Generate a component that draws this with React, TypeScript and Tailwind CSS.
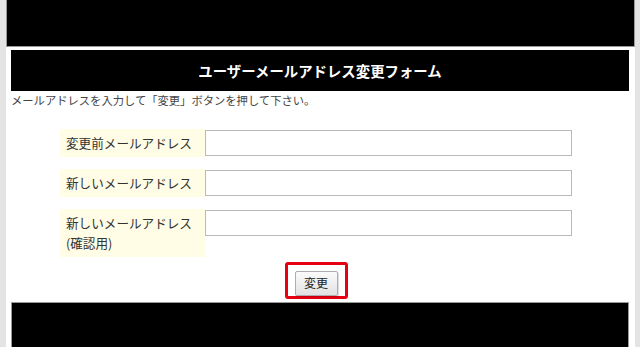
const jp = { fontFamily: '"Noto Sans CJK JP", "Noto Sans", sans-serif' };

const rows = [
  { key: 'old', label: ['変更前メールアドレス'] },
  { key: 'new', label: ['新しいメールアドレス'] },
  { key: 'confirm', label: ['新しいメールアドレス', '(確認用)'] },
];

export default function App() {
  return (
    <div className="min-h-[347px] w-[640px] overflow-hidden bg-[#e4e4e4] pl-[6px] pr-[5px]" style={jp}>
      <div className="min-h-[347px] bg-white">
        {/* header */}
        <div className="h-[47px] border border-t-0 border-[#9a9a9a] bg-black" />

        <div className="pl-[5px] pr-[6px] pt-[3px]">
          <div className="flex h-[41px] items-center justify-center bg-black">
            <h1 className="text-[14.4px] font-bold text-white">ユーザーメールアドレス変更フォーム</h1>
          </div>
          <p className="h-[18px] text-[11.3px] leading-[18px] text-[#444]">
            メールアドレスを入力して「変更」ボタンを押して下さい。
          </p>

          <form className="ml-[49px] mt-[20px] w-[512px]" onSubmit={(e) => e.preventDefault()}>
            <div className="flex flex-col gap-[12px]">
              {rows.map((row) => (
                <div key={row.key} className="flex">
                  <div className="flex w-[145px] flex-col justify-center bg-[#fffde6] py-[4px] pl-[6px] text-[12.6px] leading-[20px] text-[#333]">
                    {row.label.map((line) => (
                      <span key={line}>{line}</span>
                    ))}
                  </div>
                  <div className="flex-1">
                    <input
                      type="text"
                      className="h-[26px] w-[367px] border border-[#b9b9b9] bg-white px-1 text-[13px] outline-none"
                    />
                  </div>
                </div>
              ))}
            </div>

            <div className="mt-[5px] flex justify-center">
              <div className="rounded-[3px] border-[3px] border-[#e60012] px-[7px] pt-[4px]">
                <button
                  type="submit"
                  className="h-[25px] w-[43px] rounded-[2px] border border-[#adadad] bg-gradient-to-b from-[#fbfbfb] to-[#e2e2e2] text-[12px] leading-none text-[#222] shadow-[1px_1px_1px_rgba(0,0,0,0.15)]"
                >
                  変更
                </button>
              </div>
            </div>
          </form>

          <div className="mt-[3px] h-[60px] border border-b-0 border-[#9a9a9a] bg-black" />
        </div>
      </div>
    </div>
  );
}
